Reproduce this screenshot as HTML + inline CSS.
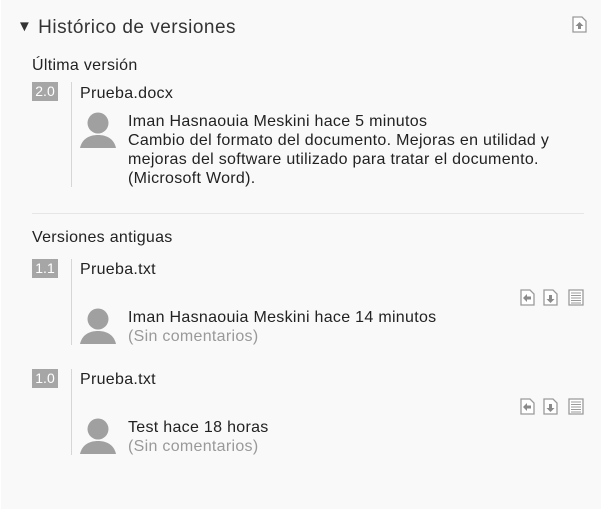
<!DOCTYPE html>
<html><head><meta charset="utf-8"><style>
body{margin:0;width:608px;height:522px;background:#fff;font-family:"Liberation Sans",sans-serif;color:#222;position:relative;overflow:hidden}
.panel{position:absolute;left:1px;top:0;width:600px;height:509px;background:#f9f9f9}
.t{position:absolute;white-space:nowrap;line-height:19px;font-size:16px;letter-spacing:0.3px}
.badge{position:absolute;left:32px;width:26px;height:19px;background:#a6a6a6;color:#fff;font-size:14px;line-height:19px;text-align:center}
.vl{position:absolute;left:71px;width:1px;background:#d6d6d6}
.g{color:#999}
.av{position:absolute;left:80px}
.ic{position:absolute}
</style></head><body>
<div class="panel"></div>
<div class="t" style="left:17px;top:17px;font-size:19px;line-height:22px;color:#333;letter-spacing:0.5px"><span style="font-size:15px;position:relative;top:-2px">▼</span> Histórico de versiones</div>
<svg class="ic" style="left:572px;top:16px" width="15" height="17" viewBox="0 0 15 17"><path d="M1 1h9l4 4v11H1z" fill="#fff" stroke="#9a9a9a" stroke-width="1.3"/><path d="M7.5 6l-4 4h2.5v3h3v-3h2.5z" fill="#8a8a8a"/></svg>
<div class="t" style="left:32px;top:56px">Última versión</div>
<div class="badge" style="top:82px">2.0</div>
<div class="vl" style="top:82px;height:105px"></div>
<div class="t" style="left:80px;top:84px">Prueba.docx</div>
<svg class="av" style="top:112px" width="36" height="36" viewBox="0 0 36 36"><circle cx="18" cy="11" r="10.5" fill="#a0a0a0"/><path d="M0 36c2-9 9-13 18-13s16 4 18 13z" fill="#a0a0a0"/></svg>
<div class="t" style="left:128px;top:112px">Iman Hasnaouia Meskini hace 5 minutos<br>Cambio del formato del documento. Mejoras en utilidad y<br>mejoras del software utilizado para tratar el documento.<br>(Microsoft Word).</div>
<div style="position:absolute;left:32px;top:213px;width:552px;height:1px;background:#e6e6e6"></div>
<div class="t" style="left:32px;top:228px">Versiones antiguas</div>

<div class="badge" style="top:259px">1.1</div>
<div class="vl" style="top:259px;height:86px"></div>
<div class="t" style="left:80px;top:260px">Prueba.txt</div>
<svg class="av" style="top:308px" width="36" height="36" viewBox="0 0 36 36"><circle cx="18" cy="11" r="10.5" fill="#a0a0a0"/><path d="M0 36c2-9 9-13 18-13s16 4 18 13z" fill="#a0a0a0"/></svg>
<div class="t" style="left:128px;top:308px">Iman Hasnaouia Meskini hace 14 minutos<br><span class="g">(Sin comentarios)</span></div>

<div class="badge" style="top:369px">1.0</div>
<div class="vl" style="top:369px;height:86px"></div>
<div class="t" style="left:80px;top:370px">Prueba.txt</div>
<svg class="av" style="top:418px" width="36" height="36" viewBox="0 0 36 36"><circle cx="18" cy="11" r="10.5" fill="#a0a0a0"/><path d="M0 36c2-9 9-13 18-13s16 4 18 13z" fill="#a0a0a0"/></svg>
<div class="t" style="left:128px;top:418px">Test hace 18 horas<br><span class="g">(Sin comentarios)</span></div>

<svg class="ic" style="left:520px;top:289px" width="64" height="17" viewBox="0 0 64 17">
<path d="M1 1h9l4 4v11H1z" fill="#fff" stroke="#9a9a9a" stroke-width="1.3"/><path d="M3 9l4-4v2.5h4v3H7V13z" fill="#8a8a8a"/>
<path d="M24 1h9l4 4v11H24z" fill="#fff" stroke="#9a9a9a" stroke-width="1.3"/><path d="M30.5 14l-4-4H29V6h3v4h2.5z" fill="#8a8a8a"/>
<path d="M49 1h14v15H49z" fill="#fff" stroke="#9a9a9a" stroke-width="1.3"/><path d="M51 4h10M51 6.5h10M51 9h10M51 11.5h10M51 14h10" stroke="#9a9a9a" stroke-width="1"/>
</svg>
<svg class="ic" style="left:520px;top:398px" width="64" height="17" viewBox="0 0 64 17">
<path d="M1 1h9l4 4v11H1z" fill="#fff" stroke="#9a9a9a" stroke-width="1.3"/><path d="M3 9l4-4v2.5h4v3H7V13z" fill="#8a8a8a"/>
<path d="M24 1h9l4 4v11H24z" fill="#fff" stroke="#9a9a9a" stroke-width="1.3"/><path d="M30.5 14l-4-4H29V6h3v4h2.5z" fill="#8a8a8a"/>
<path d="M49 1h14v15H49z" fill="#fff" stroke="#9a9a9a" stroke-width="1.3"/><path d="M51 4h10M51 6.5h10M51 9h10M51 11.5h10M51 14h10" stroke="#9a9a9a" stroke-width="1"/>
</svg>
</body></html>
